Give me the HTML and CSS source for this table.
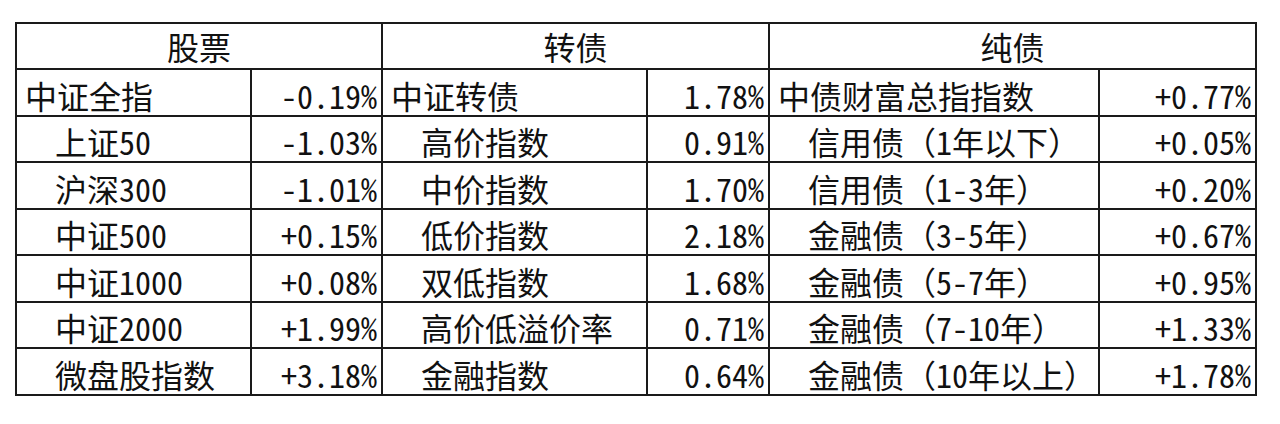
FILE: index.html
```html
<!DOCTYPE html>
<html lang="zh-CN">
<head>
<meta charset="utf-8">
<title>指数涨跌</title>
<link rel="stylesheet" href="styles.css">
</head>
<body>
<div class="sheet">
  <div class="cell head span2">股票</div>
  <div class="cell head span2">转债</div>
  <div class="cell head span2">纯债</div>

  <div class="cell lbl">中证全指</div><div class="cell val">-0.19%</div>
  <div class="cell lbl">中证转债</div><div class="cell val">1.78%</div>
  <div class="cell lbl">中债财富总指指数</div><div class="cell val">+0.77%</div>

  <div class="cell lbl ind">上证50</div><div class="cell val">-1.03%</div>
  <div class="cell lbl ind">高价指数</div><div class="cell val">0.91%</div>
  <div class="cell lbl ind">信用债（1年以下）</div><div class="cell val">+0.05%</div>

  <div class="cell lbl ind">沪深300</div><div class="cell val">-1.01%</div>
  <div class="cell lbl ind">中价指数</div><div class="cell val">1.70%</div>
  <div class="cell lbl ind">信用债（1-3年）</div><div class="cell val">+0.20%</div>

  <div class="cell lbl ind">中证500</div><div class="cell val">+0.15%</div>
  <div class="cell lbl ind">低价指数</div><div class="cell val">2.18%</div>
  <div class="cell lbl ind">金融债（3-5年）</div><div class="cell val">+0.67%</div>

  <div class="cell lbl ind">中证1000</div><div class="cell val">+0.08%</div>
  <div class="cell lbl ind">双低指数</div><div class="cell val">1.68%</div>
  <div class="cell lbl ind">金融债（5-7年）</div><div class="cell val">+0.95%</div>

  <div class="cell lbl ind">中证2000</div><div class="cell val">+1.99%</div>
  <div class="cell lbl ind">高价低溢价率</div><div class="cell val">0.71%</div>
  <div class="cell lbl ind">金融债（7-10年）</div><div class="cell val">+1.33%</div>

  <div class="cell lbl ind">微盘股指数</div><div class="cell val">+3.18%</div>
  <div class="cell lbl ind">金融指数</div><div class="cell val">0.64%</div>
  <div class="cell lbl ind">金融债（10年以上）</div><div class="cell val">+1.78%</div>
</div>
</body>
</html>
```

FILE: styles.css
```css
html, body {
  margin: 0;
  padding: 0;
  background: #ffffff;
}

body {
  padding: 22px 0 0 15px;
  font-family: "Noto Sans Mono CJK SC", "Noto Sans CJK SC", sans-serif;
  color: #111111;
}

.sheet {
  display: grid;
  width: 1242px;
  box-sizing: border-box;
  grid-template-columns: 233px 129px 263px 120px 328px 155px;
  grid-template-rows: 44px 45px 44px 45px 44px 45px 44px 45px;
  gap: 2px;
  padding: 2px;
  background: #1a1a1a;
}

.cell {
  background: #ffffff;
  display: flex;
  align-items: flex-end;
  font-size: 32px;
  line-height: 40px;
  padding-bottom: 0;
  white-space: nowrap;
  box-sizing: border-box;
}

.span2 {
  grid-column: span 2;
}

.head {
  justify-content: center;
  padding-bottom: 2px;
}

.lbl {
  padding-left: 8px;
}

.lbl.ind {
  padding-left: 38px;
}

.val {
  justify-content: flex-end;
  padding-right: 4px;
}
```
